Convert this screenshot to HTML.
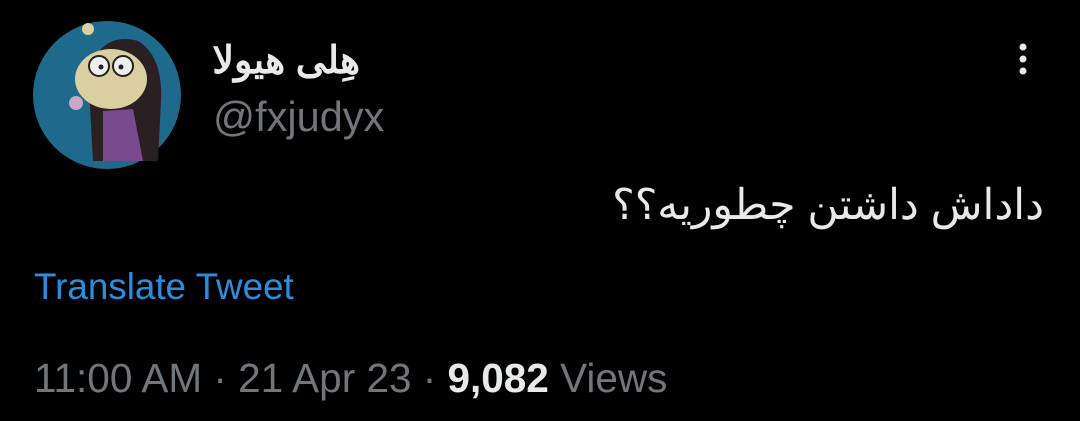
<!DOCTYPE html>
<html><head><meta charset="utf-8"><style>
body{margin:0;width:1080px;height:421px;background:#000;overflow:hidden;position:relative;font-family:"Liberation Sans","Noto Sans CJK SC",sans-serif}
.t{position:absolute;white-space:nowrap}
</style></head><body>
<svg class="t" style="left:33px;top:21px" width="150" height="150" viewBox="0 0 150 150">
<circle cx="74" cy="74" r="74" fill="#1f6a8c"/>
<path d="M55 50 Q70 10 105 20 Q130 35 128 80 L125 140 L60 140 Z" fill="#2a1f22"/>
<ellipse cx="78" cy="58" rx="36" ry="30" fill="#d9cfa0"/>
<circle cx="66" cy="45" r="10" fill="#eee" stroke="#222" stroke-width="2"/>
<circle cx="90" cy="45" r="10" fill="#eee" stroke="#222" stroke-width="2"/>
<circle cx="68" cy="46" r="2.5" fill="#222"/><circle cx="88" cy="46" r="2.5" fill="#222"/>
<path d="M70 90 L100 88 L110 140 L70 140 Z" fill="#7a4a8e"/>
<circle cx="43" cy="82" r="7" fill="#c9a8c8"/>
<circle cx="55" cy="8" r="6" fill="#d9cfa0"/>
</svg>
<div class="t" style="left:214px;top:38px;font-size:38px;font-weight:bold;color:#e7e9ea;direction:rtl;width:146px;text-align:left">هِلی هیولا</div>
<div class="t" style="left:213px;top:93px;font-size:41.5px;color:#71767b">@fxjudyx</div>
<svg class="t" style="left:1015px;top:42px" width="16" height="36"><circle cx="8" cy="5" r="3.5" fill="#e7e9ea"/><circle cx="8" cy="17" r="3.5" fill="#e7e9ea"/><circle cx="8" cy="29" r="3.5" fill="#e7e9ea"/></svg>
<div class="t" style="right:36px;top:181px;font-size:42.5px;color:#e7e9ea;direction:rtl">داداش داشتن چطوریه؟؟</div>
<div class="t" style="left:34px;top:266px;font-size:36.8px;color:#2a8ee0">Translate Tweet</div>
<div class="t" style="left:34px;top:355px;font-size:40.5px;color:#71767b">11:00 AM · 21 Apr 23 · <b style="color:#e7e9ea">9,082</b> Views</div>
</body></html>
